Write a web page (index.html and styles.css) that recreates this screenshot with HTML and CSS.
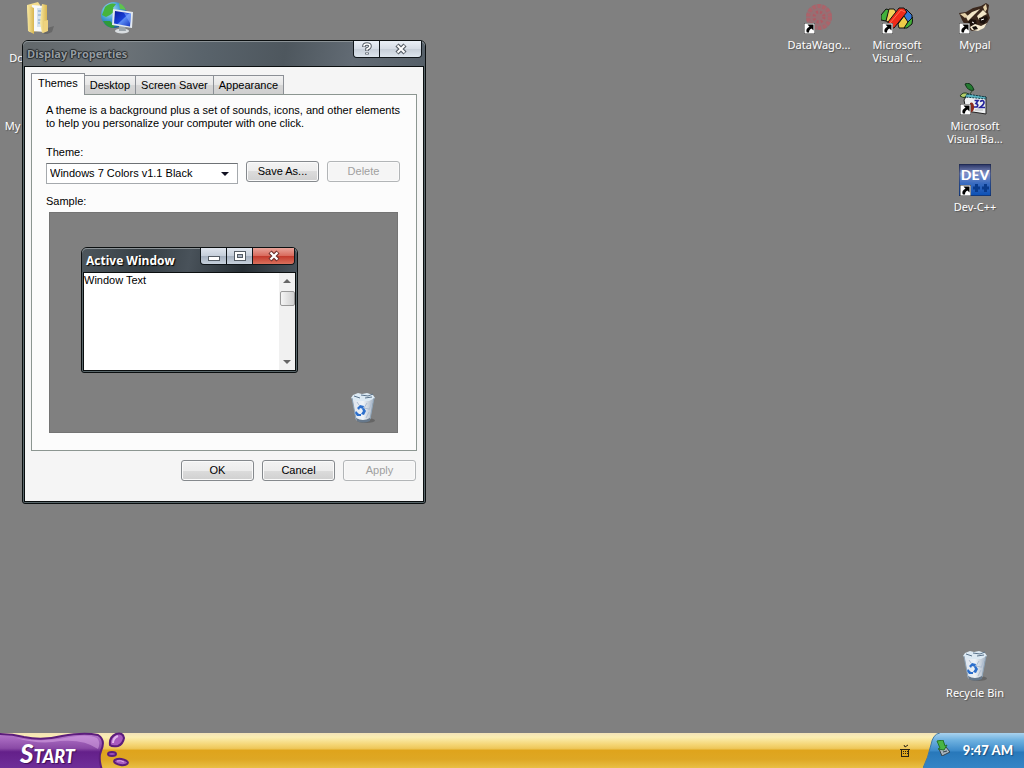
FILE: index.html
```html
<!DOCTYPE html>
<html lang="en">
<head>
<meta charset="utf-8">
<title>Desktop</title>
<link rel="stylesheet" href="styles.css">
</head>
<body>
<svg class="defs" aria-hidden="true">
  <defs>
    <linearGradient id="paper" x1="0" x2="1"><stop offset="0" stop-color="#dbe2ec"/><stop offset=".5" stop-color="#eef3f8"/><stop offset="1" stop-color="#a3b0c0"/></linearGradient>
    <linearGradient id="folder" x1="0" x2="1"><stop offset="0" stop-color="#f8e9a5"/><stop offset="1" stop-color="#d9b650"/></linearGradient>
    <radialGradient id="globe" cx=".35" cy=".3" r=".8"><stop offset="0" stop-color="#bfe8ff"/><stop offset=".5" stop-color="#3f9bd2"/><stop offset="1" stop-color="#12508c"/></radialGradient>
    <linearGradient id="screen" x1="0" y1="0" x2="1" y2="1"><stop offset="0" stop-color="#0a1a9a"/><stop offset=".5" stop-color="#1740d8"/><stop offset=".55" stop-color="#5b8cf4"/><stop offset="1" stop-color="#1434c0"/></linearGradient>
    <linearGradient id="dev" x1="0" y1="0" x2="0" y2="1"><stop offset="0" stop-color="#26305f"/><stop offset=".3" stop-color="#8292c8"/><stop offset=".6" stop-color="#3a6cc0"/><stop offset="1" stop-color="#0a4fb4"/></linearGradient>
    <linearGradient id="purple" x1="0" y1="0" x2="0" y2="1"><stop offset="0" stop-color="#b678cc"/><stop offset=".4" stop-color="#8a4aa6"/><stop offset=".5" stop-color="#64208a"/><stop offset="1" stop-color="#70309a"/></linearGradient>
    <linearGradient id="tray" x1="0" y1="0" x2="0" y2="1"><stop offset="0" stop-color="#a9d2ee"/><stop offset=".2" stop-color="#6fb2e0"/><stop offset=".5" stop-color="#3d8bca"/><stop offset=".55" stop-color="#2878ba"/><stop offset="1" stop-color="#3585c6"/></linearGradient>
    <symbol id="shortcut" viewBox="0 0 11 11">
      <path d="M0 0h11v11H0z" fill="#fff" stroke="#333"/>
      <path d="M3.500 1.500h6v6L7.500 5.500C5.500 6.500 5 7.500 5 9.500H3C1.500 7 3 4.800 5.500 3.700z" fill="#000"/>
    </symbol>
    <symbol id="bin" viewBox="0 0 32 32">
      <ellipse cx="19" cy="28.500" rx="9" ry="2.500" fill="#444" opacity=".45"/>
      <path d="M5 5L9 28q7 4 14 0L27 5z" fill="url(#paper)"/>
      <path d="M6 3l5-2 4 1 5-1 6 2 2 3-6 3H9L4 6z" fill="#dce9f3"/>
      <path d="M14 3l7 1 5-2M7 4l6 2M18 6l7-1" stroke="#59728a" fill="none"/>
      <path d="M5 6l4 21q7 4 14 0L27 6" fill="none" stroke="#8da3b7" stroke-width="1"/>
      <path d="M9 26q7 4 14 0v3q-7 3-13 0z" fill="#66788b"/>
      <path d="M20 11l-3 5 5 1M22 20l-3 6M10 10l2 3M25 10l-3 8" stroke="#aebdd1" fill="none"/>
      <path d="M10 16l3-3 4 1-1 3-3-1-1 2zM17 16l2 3-2 4-3-1 2-3-1-2zM9 19l3 3h2v2h-4l-2-3z" fill="#2c6fcc"/>
    </symbol>
  </defs>
</svg>

<main class="desktop">
  <a class="shortcut shortcut--documents" href="#documents">
    <svg class="shortcut__icon" viewBox="0 0 32 32" aria-hidden="true">
      <path d="M18 28l13-4-2 6-7 3z" fill="#444" opacity=".4"/>
      <path d="M4 3l11-3 2 3v26L6 30z" fill="#f3dc8c"/>
      <path d="M9 3l12 1v26l-10-1z" fill="#f7f9fb"/>
      <path d="M14 6h5v19h-5z" fill="#d5e2ee"/>
      <path d="M15 9h3M15 13h3M15 18h3M15 21h3" stroke="#7ba3cc"/>
      <path d="M19 2l5 1v26l-5 2-2-10z" fill="url(#folder)"/>
      <path d="M4 3l7 3v26l-6-3z" fill="url(#folder)"/>
      <path d="M21 19l4-1v11l-5 2z" fill="#efd37e"/>
    </svg>
    <span class="shortcut__label">Documents</span>
  </a>
  <a class="shortcut shortcut--network" href="#network" aria-label="Network">
    <svg class="shortcut__icon" viewBox="0 0 32 32" aria-hidden="true">
      <circle cx="13" cy="13" r="13" fill="url(#globe)"/>
      <path d="M4 5q5-5 11-3l-3 4 2 3-5 4-4 2-4-2z" fill="#46b43c"/>
      <path d="M2 19l7 0 5 5-2 2q-7-1-10-7z" fill="#2f9a38"/>
      <path d="M18 1q5 2 7 7l-6-1z" fill="#62c24c"/>
      <ellipse cx="21" cy="29" rx="7" ry="2.500" fill="#d9dde0"/>
      <path d="M18 23h6l1 6h-7z" fill="#9ba4aa"/>
      <path d="M12 7l20 3-1 16-20-3z" fill="#e3e9f0"/>
      <path d="M14 9l16 2.500-1 13-16-3z" fill="url(#screen)"/>
      <path d="M23 11l7 1-1 9z" fill="#7fa9ff" opacity=".6"/>
    </svg>
  </a>
  <a class="shortcut shortcut--computer" href="#computer">
    <span class="shortcut__label">My Computer</span>
  </a>

  <a class="shortcut shortcut--datawagon" href="#datawagon">
    <svg class="shortcut__icon" viewBox="0 0 32 32" aria-hidden="true">
      <circle cx="16" cy="15" r="13" fill="#a8636a" opacity=".55"/>
      <circle cx="16" cy="15" r="11" fill="none" stroke="#c25660" stroke-width="4" stroke-dasharray="3 2" opacity=".5"/>
      <circle cx="16" cy="15" r="5" fill="none" stroke="#c24a58" stroke-width="3" stroke-dasharray="2 2" opacity=".55"/>
      <use href="#shortcut" x="1" y="21" width="11" height="11"/>
    </svg>
    <span class="shortcut__label">DataWago...</span>
  </a>
  <a class="shortcut shortcut--vc" href="#visual-c">
    <svg class="shortcut__icon" viewBox="0 0 32 32" aria-hidden="true">
      <g stroke="#111" stroke-width="1" stroke-linejoin="round">
        <path d="M0 13l5-6 4 1-4 11-5-1z" fill="#43b13c"/>
        <path d="M8 7h5l3 4-7 10-4-2z" fill="#f1d259"/>
        <path d="M25 7l6 6v6l-5 1-4-7z" fill="#3478d3"/>
        <path d="M17 22l6-8 4 6-3 6h-6z" fill="#f0cb48"/>
        <path d="M27 20l5-5-1 7-5 4h-3z" fill="#42ad37"/>
        <path d="M7 20L18 6h5l3 4-13 16H8z" fill="#f02b19"/>
      </g>
      <path d="M9 21L20 8l4 2" fill="none" stroke="#ff6e50"/>
      <use href="#shortcut" x="1" y="21" width="11" height="11"/>
    </svg>
    <span class="shortcut__label">Microsoft Visual C...</span>
  </a>
  <a class="shortcut shortcut--mypal" href="#mypal">
    <svg class="shortcut__icon" viewBox="0 0 32 32" aria-hidden="true">
      <path d="M0 11l7-1 7-4 8-2 5-3 3 2-1 7 2 6-4 7-6 5-8 1-6-4-4-7z" fill="#3b281d"/>
      <path d="M1 12l5-1 3 3-3 2zM24 5l3-3 1 5-2 3z" fill="#e4d0a8"/>
      <path d="M7 15l6-5 8-3-5 5-7 7zM18 14l6-6 4 4-4 2-4 4z" fill="#f3e6c8"/>
      <path d="M9 20l3-3 5 1 1 5-5 2zM20 16l8-2 1 3-4 5-4-1z" fill="#1b110c"/>
      <path d="M11 25l5-3 6 2 6-3-3 5-6 3-6-1z" fill="#f5ebd2"/>
      <path d="M13 25l4-1 2 3-4 1z" fill="#120d0a"/>
      <path d="M13 20l2 1M22 18l3-1" stroke="#fff"/>
      <use href="#shortcut" x="0" y="21" width="11" height="11"/>
    </svg>
    <span class="shortcut__label">Mypal</span>
  </a>
  <a class="shortcut shortcut--vb" href="#visual-basic">
    <svg class="shortcut__icon" viewBox="0 0 32 32" aria-hidden="true">
      <path d="M6 1q6-3 9 6-6 2-9-6z" fill="#247a31" stroke="#12331a"/>
      <path d="M1 13q3-5 9-2-3 6-9 2z" fill="#b5cf69" stroke="#26401e"/>
      <path d="M10 12L14 7" stroke="#26401e"/>
      <path d="M5 17l3-5 19 2v17l-20-3z" fill="#eef0f1" stroke="#222"/>
      <path d="M8 11l19 3v2L6 14z" fill="#5ab5c3" stroke="#163c48" stroke-dasharray="2 1"/>
      <path d="M11 20q3-2 4 3t-4 7z" fill="#8d2b1d"/>
      <path d="M15.500 17.500h3.500l-2 3q3 1 1 3.500h-3M21 18.500q4-2 4 1 0 2-4 5h5" fill="none" stroke="#24249b" stroke-width="1.700"/>
      <path d="M16 27h8" stroke="#b7babb"/>
      <use href="#shortcut" x="1" y="21" width="11" height="11"/>
    </svg>
    <span class="shortcut__label">Microsoft Visual Ba...</span>
  </a>
  <a class="shortcut shortcut--dev" href="#dev-cpp">
    <svg class="shortcut__icon" viewBox="0 0 32 32" aria-hidden="true">
      <rect width="32" height="32" rx="1" fill="url(#dev)" stroke="#172247"/>
      <path d="M14 24h7M17.500 20v8M23 24h7M26.500 20v8" stroke="#0a3b8c" stroke-width="3"/>
      <text class="dev-text" x="16" y="16" text-anchor="middle">DEV</text>
      <use href="#shortcut" x="1" y="21" width="11" height="11"/>
    </svg>
    <span class="shortcut__label">Dev-C++</span>
  </a>
  <a class="shortcut shortcut--recycle" href="#recycle-bin">
    <svg class="shortcut__icon" aria-hidden="true"><use href="#bin"/></svg>
    <span class="shortcut__label">Recycle Bin</span>
  </a>

  <section class="window window--dialog" aria-labelledby="dialog-title">
    <header class="titlebar">
      <h1 class="titlebar__text titlebar__text--inactive" id="dialog-title">Display Properties</h1>
      <div class="caption">
        <button class="caption__button" type="button" aria-label="Help">
          <svg width="12" height="14" viewBox="0 0 12 14" aria-hidden="true"><path d="M3 5V4q0-2 3-2t3 2q0 2-3 3v2M6 10.500v2" fill="none" stroke="#555d66" stroke-width="3.600"/><path d="M3 4.500V4q0-2 3-2t3 2q0 2-3 3v1.500M6 11v1" fill="none" stroke="#fff" stroke-width="1.600"/></svg>
        </button>
        <button class="caption__button caption__button--wide" type="button" aria-label="Close">
          <svg width="12" height="12" viewBox="0 0 12 12" aria-hidden="true"><path d="M2 2l8 8M10 2l-8 8" stroke="#555d66" stroke-width="4.400"/><path d="M2.500 2.500l7 7M9.500 2.500l-7 7" stroke="#fff" stroke-width="2"/></svg>
        </button>
      </div>
    </header>
    <form class="dialog">
      <div class="tabs" role="tablist">
        <button class="tab tab--selected" type="button" role="tab" aria-selected="true">Themes</button>
        <button class="tab" type="button" role="tab" aria-selected="false">Desktop</button>
        <button class="tab" type="button" role="tab" aria-selected="false">Screen Saver</button>
        <button class="tab" type="button" role="tab" aria-selected="false">Appearance</button>
      </div>
      <div class="panel" role="tabpanel">
        <p class="panel__intro">A theme is a background plus a set of sounds, icons, and other elements to help you personalize your computer with one click.</p>
        <label class="panel__label" for="theme">Theme:</label>
        <div class="theme">
          <div class="theme__select">
            <select class="select" id="theme"><option>Windows 7 Colors v1.1 Black</option></select>
            <svg class="select-arrow" width="8" height="4" viewBox="0 0 8 4" aria-hidden="true"><path d="M0 0h8L4 4z" fill="#111122"/></svg>
          </div>
          <button class="button" type="button">Save As...</button>
          <button class="button" type="button" disabled>Delete</button>
        </div>
        <p class="panel__label">Sample:</p>
        <div class="sample">
          <section class="window window--sample" aria-labelledby="sample-title">
            <header class="titlebar">
              <h2 class="titlebar__text" id="sample-title">Active Window</h2>
              <div class="caption caption--active">
                <button class="caption__button" type="button" aria-label="Minimize">
                  <svg width="12" height="14" viewBox="0 0 12 14" aria-hidden="true"><rect x=".5" y="7.500" width="11" height="4" fill="#fff" stroke="#555d66"/></svg>
                </button>
                <button class="caption__button" type="button" aria-label="Maximize">
                  <svg width="12" height="12" viewBox="0 0 12 12" aria-hidden="true"><rect x=".5" y="1.500" width="11" height="9" fill="#fff" stroke="#555d66"/><rect x="3.500" y="4.500" width="5" height="3" fill="#aab4c4" stroke="#555d66"/></svg>
                </button>
                <button class="caption__button caption__button--wide caption__button--close" type="button" aria-label="Close">
                  <svg width="12" height="12" viewBox="0 0 12 12" aria-hidden="true"><path d="M2 2l8 8M10 2l-8 8" stroke="#6b2f2c" stroke-width="4.400"/><path d="M2.500 2.500l7 7M9.500 2.500l-7 7" stroke="#fff" stroke-width="2.200"/></svg>
                </button>
              </div>
            </header>
            <div class="sample-client">
              <p class="sample-client__text">Window Text</p>
              <div class="scrollbar" aria-hidden="true">
                <svg width="8" height="4" viewBox="0 0 8 4"><path d="M0 4h8L4 0z" fill="#666"/></svg>
                <span class="scrollbar__thumb"></span>
                <svg class="scrollbar__down" width="8" height="4" viewBox="0 0 8 4"><path d="M0 0h8L4 4z" fill="#666"/></svg>
              </div>
            </div>
          </section>
          <svg class="sample__bin" width="32" height="32" aria-hidden="true"><use href="#bin"/></svg>
        </div>
      </div>
      <div class="actions">
        <button class="button" type="button">OK</button>
        <button class="button" type="button">Cancel</button>
        <button class="button" type="button" disabled>Apply</button>
      </div>
    </form>
  </section>
</main>

<footer class="taskbar">
  <button class="start" type="button">
    <svg class="start__shape" width="132" height="36" viewBox="0 0 132 36" aria-hidden="true">
      <path d="M-2 2Q12 2 24 5Q42 9 62 4Q84 0 98 3Q106 8 101 19Q98 26 102 38H-2z" fill="url(#purple)" stroke="#5b1d7b" stroke-width="2"/>
      <path d="M70 5Q88 2 97 6Q101 10 98 17Q84 7 60 9Q40 13 16 6Q44 11 70 5z" fill="#dca9e8" opacity=".5"/>
      <path d="M110 13Q109 5 116 2Q123 0 124 6Q123 12 118 14Q112 15 110 13z" fill="#a85bbe" stroke="#5b1d7b" stroke-width="2"/>
      <path d="M113 11Q113 6 118 4" fill="none" stroke="#e3b8ee" stroke-width="2"/>
      <ellipse cx="112" cy="22" rx="4" ry="2" fill="#9e50b8" stroke="#5b1d7b" stroke-width="2"/>
      <ellipse cx="121" cy="30" rx="7" ry="3" fill="#a85bbe" stroke="#5b1d7b" stroke-width="2" transform="rotate(8 121 30)"/>
      <path d="M117 29q4-1 7 1" fill="none" stroke="#dca9e8"/>
    </svg>
    <span class="start__text">Start</span>
  </button>
  <svg class="taskbar__icon" width="10" height="14" viewBox="0 0 10 14" aria-hidden="true"><path d="M4 1l1 2 3-2" fill="none" stroke="#2c2414"/><path d="M0 5.500h10M1.500 5v8M8.500 5v8M1 12.500h8M3 7.500h1M5 7.500h1M7 7.500h1M3 9.500h1M5 9.500h1M7 9.500h1" fill="none" stroke="#2c2414"/></svg>
  <div class="tray">
    <svg class="tray__shape" viewBox="0 0 102 35" preserveAspectRatio="none" aria-hidden="true"><path d="M0 35Q5 25 8 12Q10 1 17 0H102V35z" fill="url(#tray)"/><path d="M0 35Q5 25 8 12Q10 1 17 0" fill="none" stroke="#3d78a6"/></svg>
    <svg class="tray__icon" width="14" height="16" viewBox="0 0 14 16" aria-hidden="true"><path d="M3 9l7-2 4 5-8 4z" fill="#a7b2ba" stroke="#34434c"/><path d="M7 12l4-1" stroke="#34434c"/><path d="M1 1l6-1 2 6 2-1-3 5-6-1 2-1z" fill="#49b544" stroke="#237328"/></svg>
    <time class="tray__clock">9:47 AM</time>
  </div>
</footer>
</body>
</html>
```
FILE: styles.css
```css
* { box-sizing: border-box; }

body {
  margin: 0;
  min-height: 100vh;
  display: grid;
  grid-template-rows: 1fr auto;
  background: #808080;
  color: #000;
  font: 11px/13px "Liberation Sans", Arial, sans-serif;
}

h1, h2, p { margin: 0; }
button, select { font: inherit; color: inherit; }
svg { display: block; flex: none; }
.defs { position: absolute; width: 0; height: 0; }

/* Desktop icons */
.desktop { position: relative; min-height: 510px; overflow: hidden; }
.shortcut {
  position: absolute;
  width: 76px;
  display: flex;
  flex-direction: column;
  align-items: center;
  gap: 4px;
  color: #fff;
  text-decoration: none;
  text-align: center;
  font-family: "Noto Sans", "Open Sans", sans-serif;
}
.shortcut__icon { width: 32px; height: 32px; }
.shortcut__label { text-shadow: 1px 1px 1px #555; }
.shortcut--documents { left: 1px; top: 2px; gap: 17px; }
.shortcut--network { left: 79px; top: 2px; }
.shortcut--computer { left: 2px; top: 119px; }
.shortcut--datawagon { right: 167px; top: 2px; }
.shortcut--vc { right: 89px; top: 2px; }
.shortcut--mypal { right: 11px; top: 2px; }
.shortcut--vb { right: 11px; top: 83px; }
.shortcut--dev { right: 11px; top: 164px; }
.shortcut--recycle { right: 11px; bottom: 34px; }
.dev-text { font: 900 14px Lato, sans-serif; fill: #fff; }

/* Windows */
.window {
  position: absolute;
  border: 1px solid #0b0f10;
  border-radius: 6px 6px 3px 3px;
  background: #59666a;
  padding: 0 1px 1px;
}
.window--dialog { left: 22px; top: 40px; width: 404px; }
.window--sample { left: 31px; top: 34px; width: 217px; }
.titlebar {
  height: 25px;
  margin: 0 -1px;
  padding: 0 3px 0 4px;
  display: flex;
  justify-content: space-between;
  border-radius: 5px 5px 0 0;
  background: linear-gradient(100deg, #62686b 0%, #6b7277 25%, #59636b 45%, #4e575e 65%, #626b74 82%, #555f68 100%);
  box-shadow: inset 0 1px #8b9296;
}
.titlebar__text {
  font: bold 12px/26px "Open Sans", "Noto Sans", sans-serif;
  color: #fff;
  white-space: nowrap;
  text-shadow: 1px 1px 1px #000;
}
.titlebar__text--inactive {
  font-size: 11px;
  color: #959ca1;
  text-shadow: 1px 0 1px #24282b, -1px 0 1px #24282b, 0 1px 1px #24282b, 0 -1px 1px #24282b;
}
.window--sample .titlebar {
  height: 24px;
  padding-right: 2px;
  background: linear-gradient(100deg, #4d565c 0%, #363f45 30%, #49525a 50%, #262e34 75%, #48525a 100%);
}
.caption {
  height: 17px;
  display: flex;
  border: 1px solid #10161a;
  border-top: 0;
  border-radius: 0 0 4px 4px;
  overflow: hidden;
}
.caption__button {
  width: 26px;
  padding: 0;
  display: grid;
  place-items: center;
  border: 0;
  border-right: 1px solid #10161a;
  background: linear-gradient(#e9eff6, #d5dce5 50%, #c6ced8 50%, #dde5ed);
}
.caption__button--wide { width: 41px; border-right: 0; }
.caption--active .caption__button { background: linear-gradient(#dfe5ee, #c5ceda 50%, #a4afbe 50%, #c6d0dc); }
.caption--active .caption__button--close { background: linear-gradient(#e9a49a, #d8695b 50%, #c2382b 50%, #d9705c); }

/* Dialog */
.dialog {
  padding: 6px 6px 20px;
  border: 1px solid #0b0f10;
  background: #f5f5f5;
}
.tabs { display: flex; align-items: flex-end; }
.tab {
  height: 19px;
  padding: 0 5px;
  white-space: nowrap;
  border: 1px solid #8c9096;
  border-left: 0;
  border-bottom: 0;
  background: linear-gradient(#f2f2f2, #e6e6e6 50%, #d6d6d6 50%, #cfcfcf);
}
.tab--selected {
  height: 22px;
  padding: 0 6px 2px;
  margin-bottom: -1px;
  border-left: 1px solid #8c9096;
  background: #fcfcfc;
  z-index: 1;
}
.panel {
  border: 1px solid #8c9691;
  background: #fcfcfc;
  padding: 9px 16px 17px 14px;
}
.panel__intro { margin: 0 -10px 16px 0; }
.panel__label { display: block; line-height: 13px; }
.theme { display: flex; gap: 8px; margin: 2px 0 11px; }
.theme__select { position: relative; flex: 1; padding-top: 2px; }
.select {
  display: block;
  width: 100%;
  height: 21px;
  padding: 0 20px 0 3px;
  appearance: none;
  border: 1px solid #a5a9ad;
  border-top-color: #6e7276;
  border-radius: 0;
  background: #fff;
}
.select-arrow { position: absolute; right: 9px; top: 11px; }
.button {
  width: 73px;
  height: 21px;
  padding: 0;
  border: 1px solid #85898d;
  border-radius: 3px;
  background: linear-gradient(#f3f3f3, #ececec 50%, #dcdcdc 50%, #d0d0d0);
  box-shadow: inset 0 0 0 1px #fafafa;
}
.button:disabled { color: #a0a0a0; border-color: #b2b5b7; background: #f5f5f5; }
.sample {
  position: relative;
  height: 221px;
  margin: 4px 2px 0 3px;
  background: #808080;
  border: 1px solid #747474;
}
.sample__bin { position: absolute; right: 18px; bottom: 8px; }
.sample-client {
  height: 99px;
  display: flex;
  justify-content: space-between;
  border: 1px solid #0b0f10;
  background: #fff;
}
.sample-client__text { line-height: 15px; }
.scrollbar {
  width: 16px;
  padding: 6px 0;
  display: flex;
  flex-direction: column;
  align-items: center;
  gap: 8px;
  background: #f1f1f1;
}
.scrollbar__thumb {
  width: 15px;
  height: 15px;
  border: 1px solid #999;
  border-radius: 2px;
  background: linear-gradient(90deg, #f5f5f5, #cfcfcf);
}
.scrollbar__down { margin-top: auto; }
.actions { display: flex; justify-content: flex-end; gap: 8px; margin: 9px 1px 0 0; }

/* Taskbar */
.taskbar {
  height: 35px;
  display: flex;
  align-items: center;
  background: linear-gradient(#f3e3b8 0, #fbeeb2 12%, #f5d778 32%, #eec75a 44%, #dfa41c 50%, #dea724 75%, #e9bf45 100%);
}
.start {
  position: relative;
  width: 132px;
  height: 35px;
  margin-right: auto;
  padding: 4px 0 0 20px;
  border: 0;
  background: none;
  text-align: left;
}
.start__shape { position: absolute; left: 0; bottom: 0; }
.start__text {
  position: relative;
  color: #fff;
  font: italic 900 26px/26px Lato, sans-serif;
  font-variant: small-caps;
  text-shadow: 1px 1px 1px #3b0d57;
}
.taskbar__icon { margin-right: 13px; }
.tray {
  position: relative;
  height: 35px;
  min-width: 101px;
  padding: 0 11px 0 13px;
  display: flex;
  align-items: center;
  justify-content: space-between;
}
.tray__shape { position: absolute; inset: 0; width: 100%; height: 100%; }
.tray__icon { position: relative; margin-bottom: 5px; }
.tray__clock {
  position: relative;
  margin-bottom: 2px;
  color: #fff;
  font: 900 13px/16px Lato, sans-serif;
  text-shadow: 1px 1px 1px #1a4f80;
}
```
